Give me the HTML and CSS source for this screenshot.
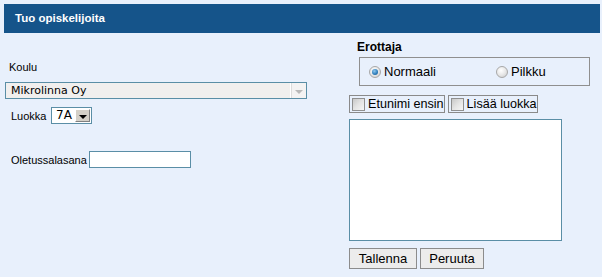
FILE: index.html
```html
<!DOCTYPE html>
<html>
<head>
<meta charset="utf-8">
<link rel="stylesheet" href="styles.css">
</head>
<body>
<div class="page">
  <div class="header">Tuo opiskelijoita</div>
  <div class="main">
    <div class="left">
      <div class="label koulu">Koulu</div>
      <div class="select select-wide disabled">
        <span class="select-text">Mikrolinna Oy</span>
        <span class="select-btn"><span class="arrow"></span></span>
      </div>
      <div class="row luokka-row">
        <span class="label">Luokka</span>
        <div class="select select-small">
          <span class="select-text">7A</span>
          <span class="select-btn"><span class="arrow"></span></span>
        </div>
      </div>
      <div class="row pass-row">
        <span class="label">Oletussalasana</span>
        <input class="textinput" type="text">
      </div>
    </div>
    <div class="right">
      <div class="legend">Erottaja</div>
      <div class="radiobox">
        <label class="radio"><span class="radio-dot checked"></span>Normaali</label>
        <label class="radio pilkku"><span class="radio-dot"></span>Pilkku</label>
      </div>
      <div class="checks">
        <label class="check"><span class="check-box"></span>Etunimi ensin</label>
        <label class="check"><span class="check-box"></span>Lisää luokka</label>
      </div>
      <textarea class="area"></textarea>
      <div class="buttons">
        <button class="btn btn-save">Tallenna</button>
        <button class="btn btn-cancel">Peruuta</button>
      </div>
    </div>
  </div>
</div>
</body>
</html>
```
FILE: styles.css
```css
html, body {
  margin: 0;
  padding: 0;
  background: #e8f0fc;
}
.page {
  padding: 4px 2px 0 4px;
  font-family: "Liberation Sans", Arial, sans-serif;
  color: #000;
}
.header {
  height: 29px;
  line-height: 29px;
  background: #15548a;
  color: #fff;
  font-weight: bold;
  font-size: 11.5px;
  padding-left: 11px;
}
.main {
  display: flex;
}
.left {
  width: 345px;
  display: flex;
  flex-direction: column;
  align-items: flex-start;
}
.label {
  font-size: 11px;
  line-height: 14px;
}
.koulu {
  margin-top: 27px;
  margin-left: 5px;
}
.select {
  display: flex;
  align-items: stretch;
  box-sizing: border-box;
  height: 17px;
  border: 1px solid #5a8ea6;
  background: #fff;
}
.select-text {
  flex: 1;
  font-family: "DejaVu Sans", Verdana, sans-serif;
  font-size: 11px;
  line-height: 15px;
  padding-left: 5px;
  white-space: nowrap;
}
.select-wide {
  margin-top: 8px;
  margin-left: 1px;
  width: 302px;
  background: #f1efee;
}
.select-btn {
  width: 16px;
  display: flex;
  align-items: center;
  justify-content: center;
  box-sizing: border-box;
}
.disabled .select-btn {
  border-left: 1px solid #ffffff;
  background: #f4f3f3;
  box-shadow: inset 1px 0 0 #dcdcdc;
}
.arrow {
  width: 0;
  height: 0;
  border-left: 4px solid transparent;
  border-right: 4px solid transparent;
  border-top: 4px solid #000;
  margin-top: 2px;
}
.disabled .arrow {
  border-top-color: #b9b9b9;
}
.row {
  display: flex;
  align-items: center;
  margin-left: 7px;
}
.luokka-row {
  margin-top: 8px;
}
.luokka-row .label {
  width: 40px;
}
.select-small {
  width: 41px;
}
.select-small .select-text {
  padding-left: 4px;
  font-size: 12px;
}
.select-small .select-btn {
  margin: 1px;
  width: 15px;
  background: #d4d0c8;
  border: 1px solid;
  border-color: #fff #808080 #808080 #fff;
}
.pass-row {
  margin-top: 27px;
}
.pass-row .label {
  margin-right: 2px;
}
.textinput {
  box-sizing: border-box;
  width: 102px;
  height: 17px;
  border: 1px solid #5a8ea6;
  background: #fff;
  margin: 0;
  padding: 0;
  outline: none;
}
.right {
  display: flex;
  flex-direction: column;
  align-items: flex-start;
}
.legend {
  font-weight: bold;
  font-size: 12px;
  line-height: 14px;
  margin-top: 7px;
  margin-left: 8px;
}
.radiobox {
  box-sizing: border-box;
  margin-top: 3px;
  margin-left: 10px;
  width: 231px;
  height: 29px;
  border: 1px solid #8f8f8f;
  display: flex;
  align-items: center;
  padding-left: 9px;
  font-size: 13px;
}
.radio {
  display: flex;
  align-items: center;
}
.pilkku {
  margin-left: 60px;
}
.radio-dot {
  box-sizing: border-box;
  width: 12px;
  height: 12px;
  border-radius: 50%;
  border: 1px solid #a8a8a8;
  background: radial-gradient(circle at 40% 35%, #ffffff 0%, #e8e8e8 50%, #c8c8c8 100%);
  margin-right: 3px;
  position: relative;
}
.radio-dot.checked::after {
  content: "";
  position: absolute;
  left: 2px;
  top: 2px;
  width: 6px;
  height: 6px;
  border-radius: 50%;
  background: radial-gradient(circle at 40% 35%, #8fc8f0 0%, #2a7ab8 60%, #1a5a90 100%);
}
.checks {
  display: flex;
  gap: 3px;
  margin-top: 9px;
}
.check {
  box-sizing: border-box;
  height: 18px;
  border: 1px solid #8a8a8a;
  display: flex;
  align-items: center;
  padding: 0 0 0 2px;
  font-size: 12.6px;
  white-space: nowrap;
}
.check-box {
  box-sizing: border-box;
  width: 13px;
  height: 13px;
  border: 1px solid #8f8f8f;
  background: linear-gradient(135deg, #c8c8c8 0%, #e4e4e4 50%, #f6f6f6 100%);
  margin-right: 3px;
}
.area {
  box-sizing: border-box;
  margin: 6px 0 0 0;
  width: 213px;
  height: 122px;
  border: 1px solid #5a8ea6;
  background: #fff;
  resize: none;
  padding: 0;
  outline: none;
}
.buttons {
  display: flex;
  gap: 3px;
  margin-top: 7px;
}
.btn {
  box-sizing: border-box;
  height: 21px;
  border: 1px solid #8c8c8c;
  background: #ececec;
  font-family: "Liberation Sans", Arial, sans-serif;
  font-size: 13px;
  color: #000;
  padding: 0;
  margin: 0;
}
.btn-save {
  width: 68px;
}
.btn-cancel {
  width: 64px;
}
```
